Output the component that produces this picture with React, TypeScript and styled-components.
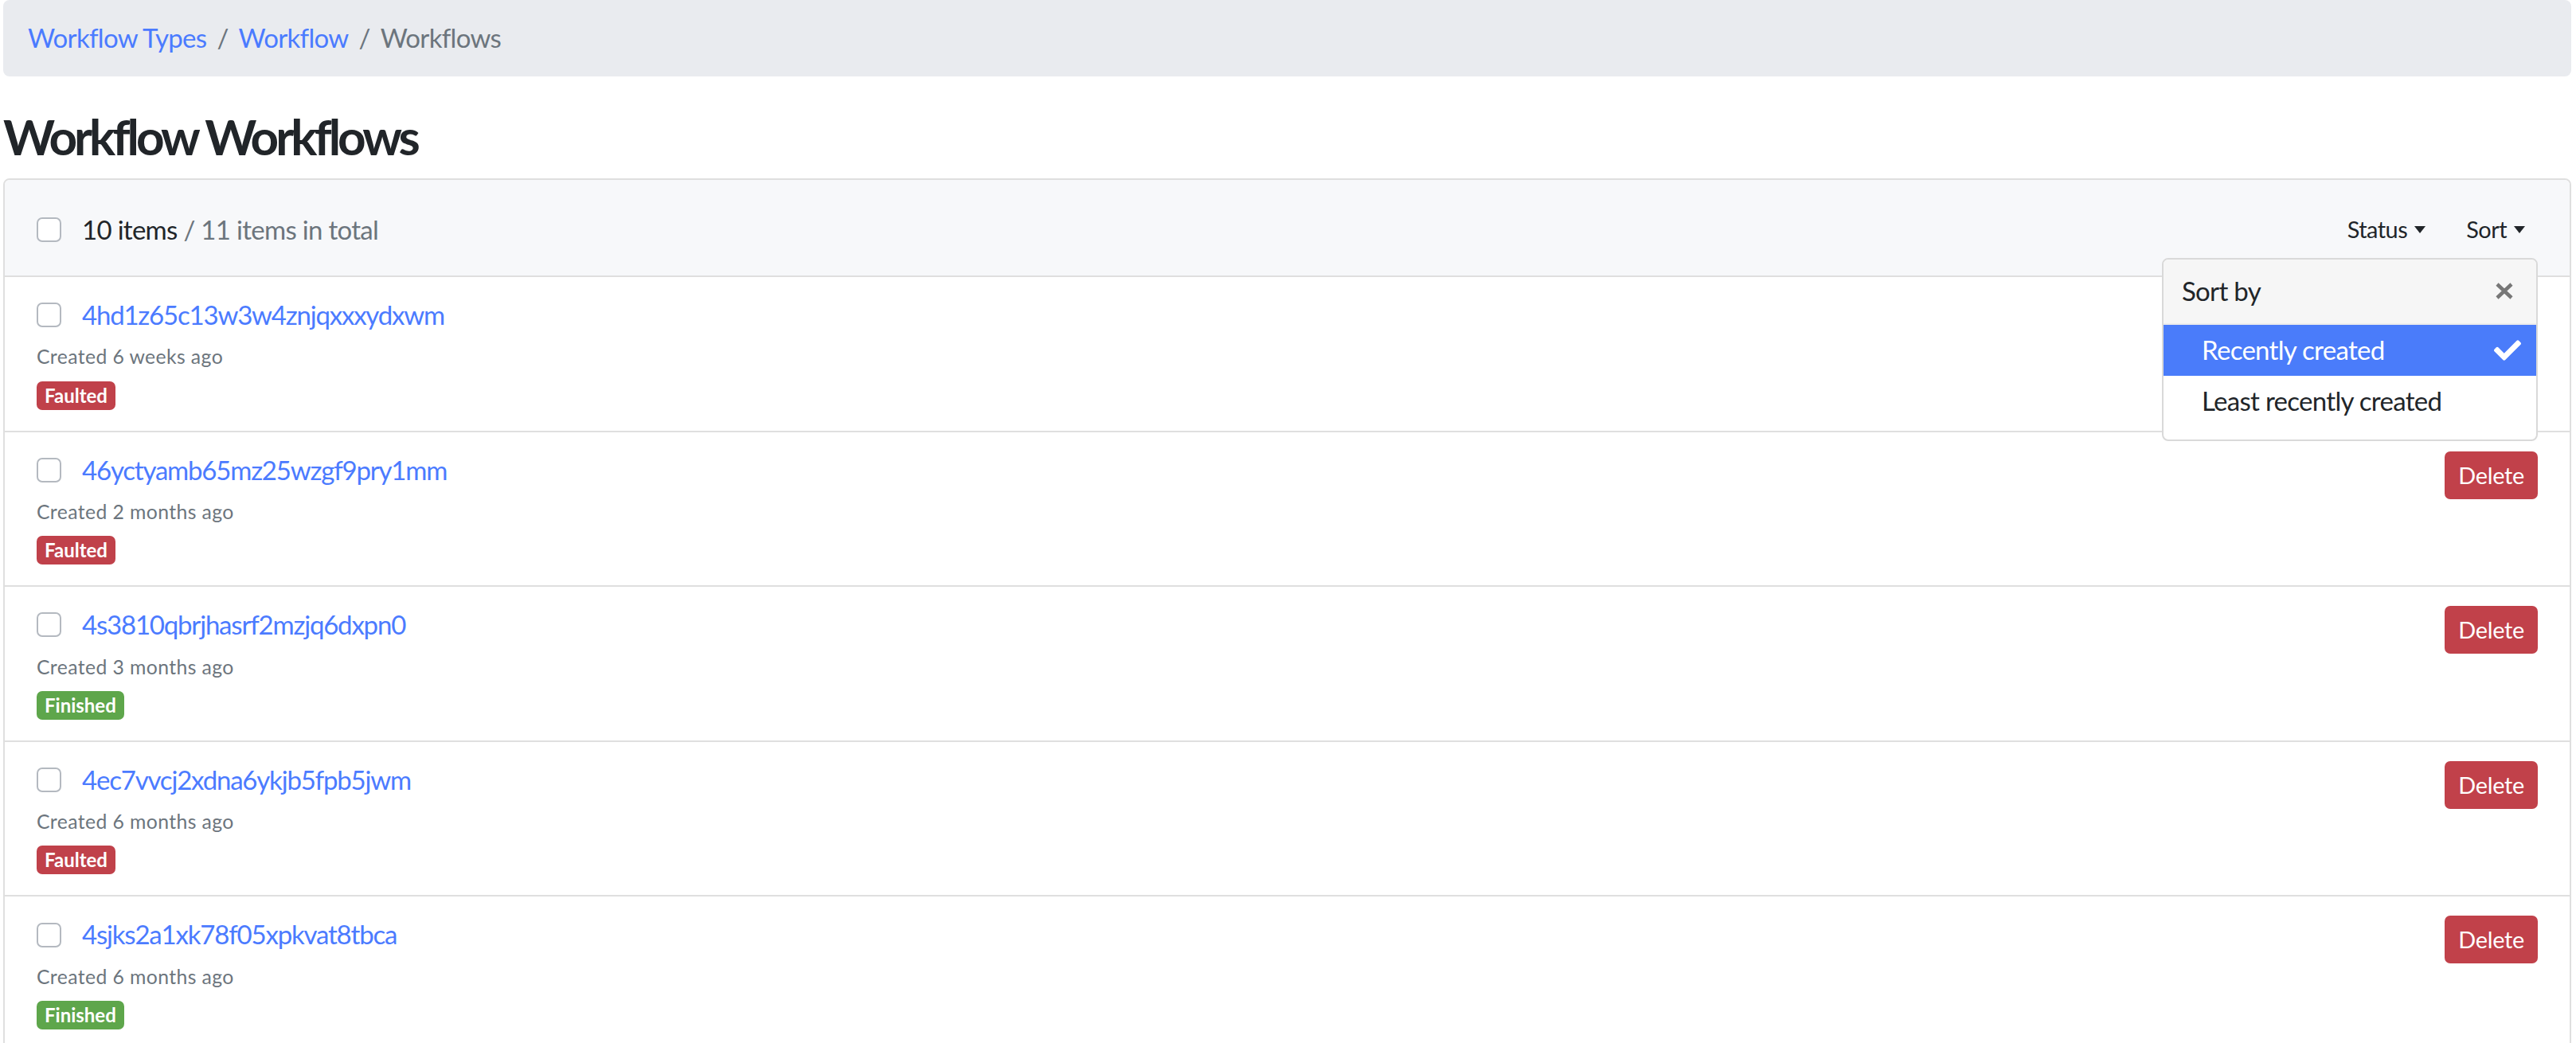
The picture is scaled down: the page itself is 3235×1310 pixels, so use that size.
import React from 'react';
import styled, { createGlobalStyle } from 'styled-components';
import { FaCheck } from 'react-icons/fa';

type Status = 'Faulted' | 'Finished';

type WorkflowRow = {
  id: string;
  created: string;
  status: Status;
};

const rows: WorkflowRow[] = [
  { id: '4hd1z65c13w3w4znjqxxxydxwm', created: 'Created 6 weeks ago', status: 'Faulted' },
  { id: '46yctyamb65mz25wzgf9pry1mm', created: 'Created 2 months ago', status: 'Faulted' },
  { id: '4s3810qbrjhasrf2mzjq6dxpn0', created: 'Created 3 months ago', status: 'Finished' },
  { id: '4ec7vvcj2xdna6ykjb5fpb5jwm', created: 'Created 6 months ago', status: 'Faulted' },
  { id: '4sjks2a1xk78f05xpkvat8tbca', created: 'Created 6 months ago', status: 'Finished' },
];

export default function App() {
  return (
    <>
      <GlobalStyle />
      <Page>
        <Breadcrumb>
          <Crumb href="#">Workflow Types</Crumb>
          <Divider>/</Divider>
          <Crumb href="#">Workflow</Crumb>
          <Divider>/</Divider>
          <CurrentCrumb>Workflows</CurrentCrumb>
        </Breadcrumb>

        <Title>Workflow Workflows</Title>

        <Card>
          <CardHeader>
            <HeaderLeft>
              <Checkbox type="checkbox" />
              <span>
                10 items <Muted>/ 11 items in total</Muted>
              </span>
            </HeaderLeft>

            <Toolbar>
              <Toggle>Status</Toggle>
              <DropdownWrap>
                <Toggle>Sort</Toggle>
                <Menu>
                  <MenuHeader>
                    <span>Sort by</span>
                    <CloseIcon viewBox="0 0 22 21">
                      <path d="M2 2 L20 19 M20 2 L2 19" />
                    </CloseIcon>
                  </MenuHeader>
                  <MenuItem $active>
                    Recently created
                    <FaCheck size={34} />
                  </MenuItem>
                  <MenuItem>Least recently created</MenuItem>
                </Menu>
              </DropdownWrap>
            </Toolbar>
          </CardHeader>

          {rows.map((row) => (
            <ListItem key={row.id}>
              <ItemBody>
                <TitleRow>
                  <Checkbox type="checkbox" />
                  <ItemLink href="#">{row.id}</ItemLink>
                </TitleRow>
                <Created>{row.created}</Created>
                <Badge $status={row.status}>{row.status}</Badge>
              </ItemBody>
              <DeleteButton>Delete</DeleteButton>
            </ListItem>
          ))}
        </Card>
      </Page>
    </>
  );
}

const GlobalStyle = createGlobalStyle`
  * { box-sizing: border-box; }
  body {
    margin: 0;
    background: #fff;
    color: #212529;
    font-family: "Segoe UI", Lato, "Liberation Sans", sans-serif;
    font-size: 33px;
    line-height: 1.5;
    letter-spacing: -0.7px;
  }
`;

const Page = styled.div`
  height: 100vh;
  overflow: hidden;
  padding: 0 6px 0 4px;
`;

const Breadcrumb = styled.nav`
  display: flex;
  align-items: center;
  padding: 23px 31px;
  background: #e9ebef;
  border-radius: 8px;
`;

const Crumb = styled.a`
  color: #4b7bff;
  text-decoration: none;
`;

const CurrentCrumb = styled.span`
  color: #6c757d;
`;

const Divider = styled.span`
  color: #6c757d;
  padding: 0 13px;
`;

const Title = styled.h2`
  margin: 38px 0 16px;
  font-size: 62px;
  font-weight: 700;
  line-height: 1.2;
  letter-spacing: -4px;
`;

const Card = styled.div`
  border: 2px solid #dfdfdf;
  border-radius: 8px;
`;

const CardHeader = styled.div`
  display: flex;
  align-items: center;
  justify-content: space-between;
  height: 122px;
  padding: 6px 40px 0;
  background: #f7f8fa;
  border-bottom: 2px solid #dfdfdf;
  border-radius: 6px 6px 0 0;
`;

const HeaderLeft = styled.div`
  display: flex;
  align-items: center;
  gap: 26px;
`;

const Muted = styled.span`
  color: #6c757d;
`;

const Checkbox = styled.input`
  appearance: none;
  margin: 0;
  width: 31px;
  height: 31px;
  flex: none;
  background: #fff;
  border: 2px solid #b4b9c0;
  border-radius: 7px;
`;

const Toolbar = styled.div`
  display: flex;
  align-items: center;
  gap: 19px;
`;

const DropdownWrap = styled.div`
  position: relative;
`;

const Toggle = styled.button`
  display: flex;
  align-items: center;
  padding: 9px 16px;
  border: none;
  background: none;
  color: #212529;
  font-family: inherit;
  font-size: 28.875px;
  line-height: 1.5;
  letter-spacing: -0.5px;

  &::after {
    content: '';
    margin-left: 9px;
    border-top: 9px solid #212529;
    border-left: 7.5px solid transparent;
    border-right: 7.5px solid transparent;
  }
`;

const Menu = styled.div`
  position: absolute;
  top: calc(100% + 4px);
  right: 0;
  z-index: 10;
  width: 472px;
  padding-bottom: 16px;
  background: #fff;
  border: 2px solid #d9d9d9;
  border-radius: 8px;
  overflow: hidden;
`;

const MenuHeader = styled.div`
  display: flex;
  align-items: center;
  justify-content: space-between;
  padding: 15px 29px 16px 23px;
  background: #f6f6f6;
  border-bottom: 2px solid #ececec;
  color: #212529;
`;

const CloseIcon = styled.svg`
  width: 22px;
  height: 21px;
  fill: none;
  stroke: #777;
  stroke-width: 4.5;
`;

const MenuItem = styled.div<{ $active?: boolean }>`
  display: flex;
  align-items: center;
  justify-content: space-between;
  height: 64px;
  padding: 0 19px 0 48px;
  background: ${({ $active }) => ($active ? '#4a7cfa' : '#fff')};
  color: ${({ $active }) => ($active ? '#fff' : '#212529')};
`;

const ListItem = styled.div`
  display: flex;
  align-items: flex-start;
  justify-content: space-between;
  padding: 23px 40px 26px;
  border-bottom: 2px solid #dfdfdf;
`;

const ItemBody = styled.div`
  display: flex;
  flex-direction: column;
  align-items: flex-start;
`;

const TitleRow = styled.div`
  display: flex;
  align-items: center;
  gap: 26px;
`;

const ItemLink = styled.a`
  color: #4b7bff;
  text-decoration: none;
  letter-spacing: -1.2px;
`;

const Created = styled.div`
  margin-top: 9px;
  font-size: 24.75px;
  color: #6c757d;
  letter-spacing: 0.4px;
`;

const Badge = styled.span<{ $status: Status }>`
  margin-top: 12px;
  padding: 3px 10px;
  border-radius: 7px;
  background: ${({ $status }) => ($status === 'Finished' ? '#5ea64b' : '#c0414a')};
  color: #fff;
  font-size: 24px;
  font-weight: 700;
  line-height: 30px;
  letter-spacing: 0;
`;

const DeleteButton = styled.button`
  margin-top: 1px;
  height: 60px;
  padding: 0 17px;
  border: none;
  border-radius: 7px;
  background: #c1414a;
  color: #fff;
  font-family: inherit;
  font-size: 28.875px;
  letter-spacing: -0.3px;
`;
